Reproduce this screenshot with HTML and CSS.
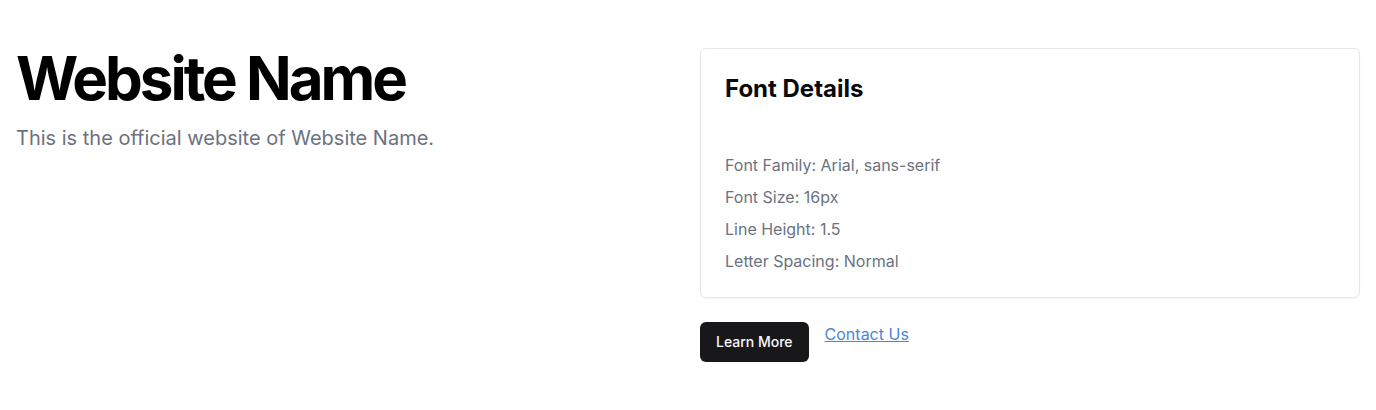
FILE: index.html
```html
<!DOCTYPE html>
<html lang="en">
<head>
<meta charset="utf-8">
<title>Website Name</title>
<link rel="stylesheet" href="styles.css">
</head>
<body>
<main class="page">
  <section class="intro">
    <h1 class="title">Website Name</h1>
    <p class="lead">This is the official website of Website Name.</p>
  </section>
  <section class="side">
    <div class="card">
      <div class="card-header">
        <h2 class="card-title">Font Details</h2>
      </div>
      <div class="card-content">
        <ul class="details">
          <li>Font Family: Arial, sans-serif</li>
          <li>Font Size: 16px</li>
          <li>Line Height: 1.5</li>
          <li>Letter Spacing: Normal</li>
        </ul>
      </div>
    </div>
    <div class="actions">
      <button class="btn" type="button">Learn More</button>
      <a class="link" href="#">Contact Us</a>
    </div>
  </section>
</main>
</body>
</html>
```

FILE: styles.css
```css
* { box-sizing: border-box; }
html, body { margin: 0; padding: 0; background: #fff; }
body { font-family: Inter, "Noto Sans", sans-serif; color: #09090b; }

.page {
  display: grid;
  grid-template-columns: 1fr 1fr;
  gap: 24px;
  padding: 48px 16px;
}

.title {
  margin: 0;
  font-size: 60px;
  line-height: 60px;
  font-weight: 700;
  letter-spacing: -0.05em;
  color: #000;
}

.lead {
  margin: 16px 0 0;
  font-size: 20px;
  line-height: 28px;
  color: #6b7280;
}

.card {
  border: 1px solid #e5e7eb;
  border-radius: 6px;
  background: #fff;
  box-shadow: 0 1px 2px rgba(0,0,0,0.04);
}

.card-header {
  padding: 24px 24px 0;
}

.card-title {
  margin: 0;
  font-size: 24px;
  line-height: 32px;
  font-weight: 700;
  letter-spacing: 0;
  color: #09090b;
}

.card-content {
  padding: 48px 24px 24px;
}

.details {
  list-style: none;
  margin: 0;
  padding: 0;
  display: flex;
  flex-direction: column;
  gap: 8px;
}

.details li {
  font-size: 16px;
  line-height: 24px;
  color: #6b7280;
}

.actions {
  display: flex;
  align-items: flex-start;
  gap: 16px;
  margin-top: 24px;
}

.btn {
  height: 40px;
  padding: 0 16px;
  border: 0;
  border-radius: 6px;
  background: #18181b;
  color: #fafafa;
  font-family: Inter, "Noto Sans", sans-serif;
  font-size: 14px;
  font-weight: 500;
  line-height: 20px;
}

.link {
  font-size: 16px;
  line-height: 24px;
  color: #4a86d4;
  text-decoration: underline;
}
```
